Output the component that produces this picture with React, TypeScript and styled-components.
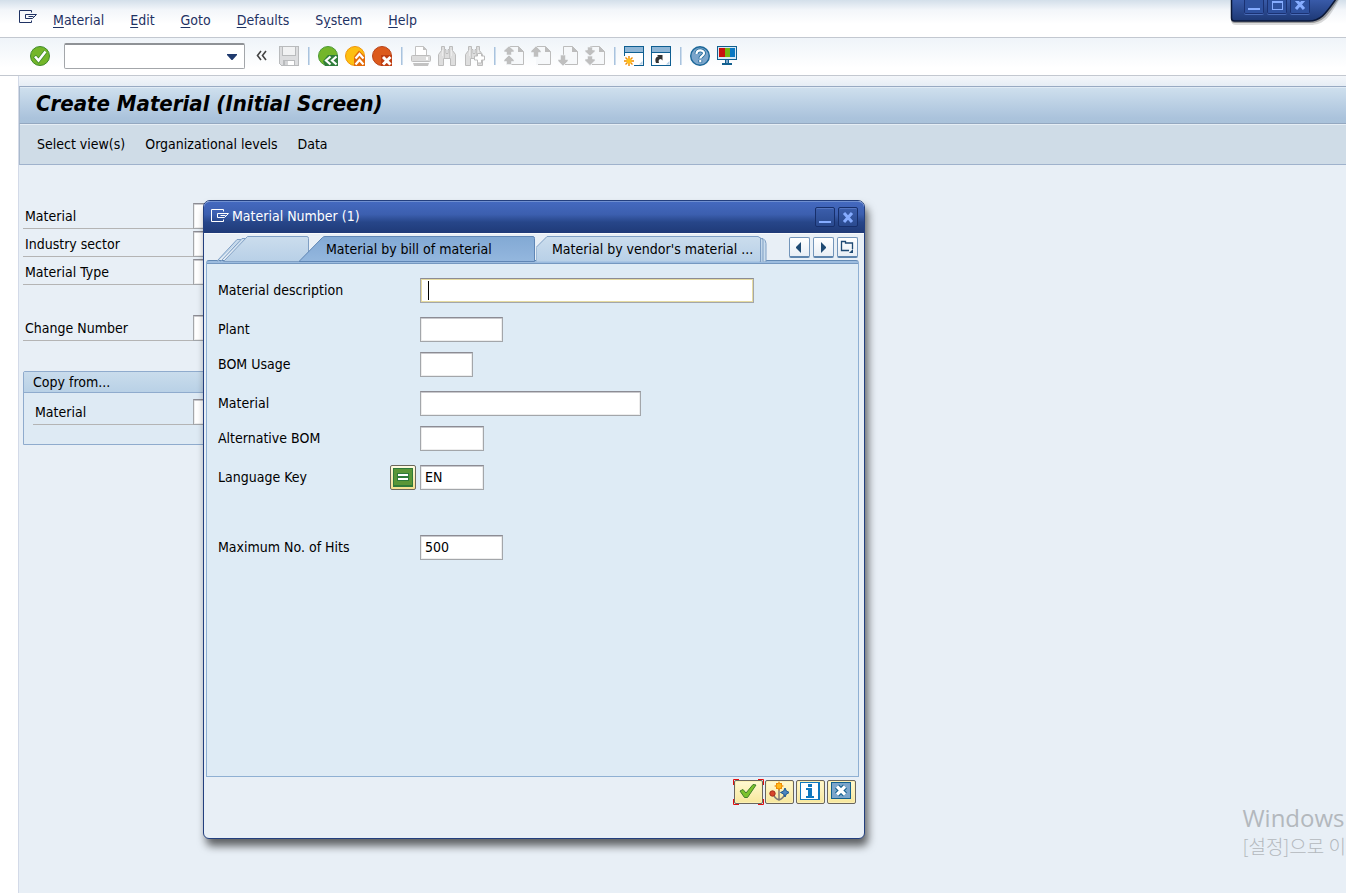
import React from "react";
import styled, { createGlobalStyle, css } from "styled-components";

const GlobalStyle = createGlobalStyle`
  *, *::before, *::after { box-sizing: border-box; }
  html, body { margin: 0; }
  body {
    background: #e8eff6;
    color: #000;
    font-family: "DejaVu Sans Condensed", Tahoma, "Noto Sans CJK KR", sans-serif;
    font-size: 14px;
    line-height: 20px;
  }
  button, input { font: inherit; color: inherit; }
  svg { display: block; flex: none; }
`;

const Screen = styled.div`
  position: relative;
  display: flex;
  flex-direction: column;
  min-height: 100vh;
  overflow: hidden;
`;

const MenuBar = styled.nav`
  display: flex;
  align-items: flex-start;
  gap: 16px;
  height: 38px;
  padding: 10px 19px 0;
  background: linear-gradient(#d3dfea, #f3f6fa 10px, #fff 24px);
  border-bottom: 1px solid #c3c8d0;
  color: #1f3263;
`;

const MenuList = styled.div`
  display: flex;
  gap: 26px;
`;

const MenuItem = styled.button`
  padding: 0;
  border: 0;
  background: none;
  u { text-underline-offset: 2px; }
`;

const ToolBar = styled.div`
  display: flex;
  align-items: center;
  gap: 7px;
  height: 38px;
  padding: 0 30px 1px;
  background: linear-gradient(#eff4f9, #fff 30px);
  border-bottom: 1px solid #c3c8d0;
`;

const ToolButton = styled.button`
  display: flex;
  padding: 0;
  border: 0;
  background: none;
`;

const Divider = styled.span`
  width: 2px;
  height: 18px;
  margin: 0 1px 0 2px;
  background: linear-gradient(90deg, #a9c3de 50%, #cddded 50%);
`;

const CommandBox = styled.div`
  display: flex;
  align-items: center;
  width: 181px;
  height: 26px;
  margin: 0 4px 0 7px;
  border: 1px solid #a3a6aa;
  border-top: 2px solid #8f9296;
  border-radius: 2px;
  background: #fff;
`;

const CommandInput = styled.input`
  flex: 1;
  min-width: 0;
  padding: 0 4px;
  border: 0;
  outline: 0;
  background: none;
`;

const CommandToggle = styled.button`
  padding: 0 7px;
  border: 0;
  background: none;
`;

const Collapse = styled.button`
  display: flex;
  margin-right: 5px;
  padding: 0;
  border: 0;
  background: none;
`;

const Body = styled.div`
  flex: 1;
  display: flex;
  padding-left: 18px;
  background: linear-gradient(90deg, #fff 18px, transparent 18px);
`;

const Page = styled.main`
  flex: 1;
  min-width: 0;
  border-left: 1px solid #d3dae8;
`;

const PageTop = styled.div`
  height: 10px;
  background: linear-gradient(#f3f6fa, #e6edf5);
`;

const TitleBar = styled.header`
  display: flex;
  align-items: center;
  height: 38px;
  padding: 0 16px 2px;
  border-top: 1px solid #98aac2;
  border-bottom: 1px solid #94a8c0;
  border-left: 1px solid #a9b9cc;
  background: linear-gradient(#cfe0ee, #abc3dc 85%, #a9c2da);
  box-shadow: inset 0 1px #e0ebf5;
`;

const Title = styled.h1`
  margin: 0;
  font-size: 22px;
  line-height: 26px;
  font-style: italic;
  font-weight: 700;
`;

const FunctionBar = styled.div`
  display: flex;
  align-items: center;
  gap: 20px;
  height: 41px;
  padding: 0 17px;
  border-bottom: 1px solid #9fb2cc;
  border-left: 1px solid #a9b9cc;
  background: #cfdce7;
  box-shadow: inset 0 1px #e6eef5;
`;

const FunctionButton = styled.button`
  padding: 0;
  border: 0;
  background: none;
`;

const BackForm = styled.form`
  display: flex;
  flex-direction: column;
  gap: 30px;
  max-width: 480px;
  padding: 38px 4px;
`;

const RowStack = styled.div`
  display: grid;
  gap: 2px;
`;

const BackRow = styled.div<{ $inset?: boolean }>`
  display: flex;
  height: 26px;
  margin-left: ${(p) => (p.$inset ? 9 : 0)}px;
`;

const BackLabel = styled.label<{ $inset?: boolean }>`
  width: ${(p) => (p.$inset ? 160 : 170)}px;
  padding: 3px 2px 0;
  border-bottom: 1px solid #b4b4b4;
`;

const fieldLook = css`
  height: 26px;
  padding: 0 4px 1px;
  border: 1px solid #a3a6aa;
  border-top-color: #8c8c94;
  border-radius: 0;
  outline: 0;
  background: #fff;
  box-shadow: inset 0 1px #c9c9cd, inset 1px 0 #ededed, inset -1px -1px #ededed;
`;

const BackField = styled.input`
  ${fieldLook}
  width: 180px;
`;

const GroupBox = styled.section`
  height: 74px;
  border: 1px solid #8fabcd;
  border-radius: 2px 2px 0 0;
  background: #deeaf4;
`;

const GroupTitle = styled.h2`
  height: 21px;
  margin: 0 0 6px;
  padding: 0 9px;
  border-bottom: 1px solid #8fabcd;
  background: linear-gradient(#c9dcec, #b9d1e6);
  font-size: 14px;
  font-weight: 400;
  line-height: 20px;
`;

const WindowControls = styled.div`
  position: absolute;
  top: 0;
  right: 0;
  width: 118px;
  height: 30px;
  display: flex;
  gap: 3px;
  padding-left: 16px;
`;

const ControlsShape = styled.svg`
  position: absolute;
  top: 0;
  left: 0;
`;

const ControlButton = styled.button`
  position: relative;
  width: 20px;
  height: 14px;
  padding: 0 0 0 3px;
  border: 1px solid #1b3273;
  border-top: 0;
  border-radius: 0 0 2px 2px;
  background: #2f52a0;
  box-shadow: 0 1px #4a6cb8;
`;

const Dialog = styled.section`
  position: absolute;
  top: 200px;
  left: 203px;
  width: 662px;
  border: 1px solid #233f7e;
  border-radius: 7px 7px 6px 6px;
  background: #e8eff6;
  box-shadow: 3px 7px 9px rgba(0, 0, 0, 0.6);
`;

const DialogTitleBar = styled.header`
  display: flex;
  align-items: center;
  gap: 3px;
  height: 32px;
  padding: 0 6px 3px 7px;
  border-top: 1px solid #6f8fd0;
  border-radius: 6px 6px 0 0;
  background: linear-gradient(#4469bf, #3c5faf 40%, #274689 65%, #1f3a78);
  color: #fff;
`;

const DialogTitle = styled.h2`
  flex: 1;
  margin: 0;
  font-size: 14px;
  font-weight: 400;
`;

const DialogControl = styled.button`
  width: 20px;
  height: 20px;
  margin-top: 2px;
  padding: 0;
  border: 1px solid #172f6b;
  border-radius: 2px;
  background: linear-gradient(#3b5eac, #2a4a8f);
  box-shadow: inset 0 1px #5475c0;
`;

const TabStrip = styled.div`
  display: flex;
  align-items: flex-start;
  height: 27px;
  padding: 2px 6px 0 13px;
  border-top: 1px solid #f8fafc;
`;

const Tab = styled.button<{ $width: number; $lead: number; $active?: boolean }>`
  position: relative;
  z-index: ${(p) => (p.$active ? 1 : 0)};
  flex: none;
  width: ${(p) => p.$width}px;
  height: 26px;
  margin-right: ${(p) => (p.$active ? 0 : -10)}px;
  padding: 0 0 0 ${(p) => p.$lead}px;
  border: 0;
  background: none;
  text-align: left;
  white-space: nowrap;
  svg { position: absolute; top: 0; left: 0; z-index: -1; }
`;

const TabTools = styled.div`
  display: flex;
  gap: 3px;
  margin: 1px 0 0 auto;
`;

const TabTool = styled.button`
  display: grid;
  place-items: center;
  width: 21px;
  height: 21px;
  padding: 0 2px 0 0;
  border: 1px solid #7395ba;
  border-bottom: 2px solid #5d84ad;
  border-radius: 2px;
  background: linear-gradient(#fff, #e8eef5);
`;

const Pane = styled.form`
  display: flex;
  flex-direction: column;
  gap: 14px;
  min-height: 517px;
  margin: 0 5px 0 2px;
  padding: 17px 11px;
  border: 1px solid #8fb0d3;
  border-top-color: #6289b4;
  border-radius: 3px 3px 0 0;
  background: linear-gradient(#9cbcdf 2px, #7598c0 2px, #7598c0 3px, #deebf5 3px);
`;

const FieldPair = styled.div`
  display: grid;
  gap: 10px;
`;

const FieldRow = styled.div<{ $apart?: boolean }>`
  display: flex;
  align-items: center;
  height: 25px;
  margin-top: ${(p) => (p.$apart ? 31 : 0)}px;
`;

const FieldLabel = styled.label`
  width: 172px;
  padding-bottom: 2px;
`;

const OptionSlot = styled.span`
  width: 30px;
`;

const Field = styled.input<{ $width: number; $current?: boolean }>`
  ${fieldLook}
  width: ${(p) => p.$width}px;
  height: 25px;
  ${(p) => p.$current && css`
    box-shadow: inset 0 0 0 1px #e6dba0;
  `}
`;

const TextCaret = styled.span`
  width: 1px;
  height: 19px;
  margin-left: -326px;
  background: #000;
`;

const OptionButton = styled.button`
  display: grid;
  place-items: center;
  width: 26px;
  height: 25px;
  padding: 0;
  border: 1px solid #6b675c;
  border-radius: 2px;
  background: linear-gradient(#fffbe0, #f4e08f);
`;

const DialogFooter = styled.footer`
  display: flex;
  justify-content: flex-end;
  gap: 2px;
  height: 61px;
  padding: 3px 8px 0;
`;

const FooterButton = styled.button<{ $focused?: boolean }>`
  position: relative;
  display: grid;
  place-items: center;
  width: 29px;
  height: 24px;
  padding: 0 2px 2px 0;
  border: 1px solid #68655e;
  border-radius: 2px;
  background: linear-gradient(#fff9d2, #f7e79c);
  box-shadow: inset 0 0 0 1px #fbf0b4;
`;

const FocusCorners = styled.svg`
  position: absolute;
  top: -2px;
  left: -2px;
`;

const Watermark = styled.div`
  position: absolute;
  right: 0;
  bottom: 34px;
  color: #b3b8bd;
  white-space: nowrap;
`;

const WatermarkTitle = styled.div`
  font: 24px/30px "Open Sans", "Noto Sans", sans-serif;
`;

const WatermarkText = styled.div`
  font: 300 19px/26px "Noto Sans CJK KR", sans-serif;
`;

const Icon = ({ children, crisp, w = 20, h = 20 }: { children: React.ReactNode; crisp?: boolean; w?: number; h?: number }) => (
  <svg width={w} height={h} viewBox={`0 0 ${w} ${h}`} fill="none" aria-hidden="true" shapeRendering={crisp ? "crispEdges" : undefined}>
    {children}
  </svg>
);

const ExitIcon = ({ color }: { color: string }) => (
  <Icon w={18} h={14}>
    <path d="M12.500 2.500V.5H.5v12h12v-2M6.500 4.500H17.500l-4 4h-7zM9.500 6.500h5" stroke={color} />
  </Icon>
);

const CheckIcon = () => (
  <Icon>
    <circle cx="10" cy="10" r="9.500" fill="#74b62a" stroke="#3f8a2a" />
    <path d="M4.500 10l4 4.500L15.500 5.500" stroke="#3f8a2a" strokeWidth="4" />
    <path d="M5 10.500l3.500 4L15.500 5.500" stroke="#fff" strokeWidth="2.600" />
  </Icon>
);

const SaveIcon = () => (
  <Icon crisp>
    <path d="M0 0h20v20H2l-2-2z" fill="#b9bbbd" />
    <path d="M1 1h18v18H2l-1-1z" fill="#dcdddf" />
    <path d="M3 0h14v10H3z" fill="#b9bbbd" />
    <path d="M4 1h12v8H4z" fill="#f1f2f3" />
    <path d="M4 14h12v6H4z" fill="#b9bbbd" />
    <path d="M6 15h9v4H6z" fill="#fff" />
    <path d="M6 15h3v4H6z" fill="#d4d5d7" />
  </Icon>
);

const BackIcon = () => (
  <Icon>
    <circle cx="10" cy="10" r="9.500" fill="#74b62a" stroke="#4b9a34" />
    <path d="M20 9v11H7l-2-5 5-6z" fill="#2f7d3a" />
    <path d="M12.500 10.500L8 14.500l4.500 4M18.500 10.500L14 14.500l4.500 4" stroke="#fff" strokeWidth="2.200" />
  </Icon>
);

const UpIcon = () => (
  <Icon>
    <circle cx="10" cy="10" r="9.500" fill="#fdbf12" stroke="#f0940a" />
    <path d="M14 4.500l6 6V20H9v-9.500z" fill="#e26b0a" />
    <path d="M10.500 12.500L14.500 8l4 4.500M10.500 18.500l4-4.500 4 4.500" stroke="#fff" strokeWidth="2.200" />
  </Icon>
);

const CancelIcon = () => (
  <Icon>
    <circle cx="10" cy="10" r="9.500" fill="#dc5a1c" stroke="#b8441a" />
    <path d="M9 9h11v11H9z" fill="#bf3e12" />
    <path d="M11 11l7.500 7.500M18.500 11L11 18.500" stroke="#fff" strokeWidth="3" />
  </Icon>
);

const PrintIcon = () => (
  <Icon>
    <path d="M4.500 9V.5h8l3 3V9" fill="#fff" stroke="#c2c2c2" />
    <path d="M12 0l4 4h-4z" fill="#c2c2c2" />
    <rect x=".5" y="9.500" width="19" height="6" rx="1" fill="#dcdcdc" stroke="#bdbdbd" />
    <path d="M15 11h2v3h-2z" fill="#fff" />
    <path d="M2 17h16l-1 3H3z" fill="#c2c2c2" />
  </Icon>
);

const Binoculars = () => (
  <>
    <path d="M3.500 .5h3v3h1.500v4h2v-4h1.500v-3h3v4l3 4v11h-5v-7h-7v7h-5v-11l3-4z" fill="#dedede" stroke="#bcbcbc" />
    <path d="M4.500 4v6M13.500 4v6" stroke="#ececec" />
    <path d="M6.500 3v9M11.500 3v9" stroke="#c6c6c6" />
  </>
);

const FindIcon = () => <Icon><Binoculars /></Icon>;

const FindNextIcon = () => (
  <Icon>
    <Binoculars />
    <path d="M12.500 7.500h4v2.500h3v4h-3v3h-4v-3h-3v-4h3z" fill="#fff" stroke="#bcbcbc" />
  </Icon>
);

const pageArrows = {
  first: "M5 0l5 4.500V6H7.500v3h-5V6H0V4.500zM5 9l5 5v1.500H7.500v3h-5v-3H0V14z",
  previous: "M5 0l5 5v1.500H7.500V11h-5V6.500H0V5z",
  next: "M5 20l5-5v-1.500H7.500V9h-5v4.500H0V15z",
  last: "M5 10l5-4.500V4H7.500V1h-5v3H0v1.500zM5 19.500l5-5V13H7.500v-3h-5v3H0v1.500z",
};

const PageIcon = ({ move }: { move: keyof typeof pageArrows }) => (
  <Icon>
    <path d="M5 1h10l4 4v14H5z" fill="#f6f8fa" />
    <path d="M5.500 9V.5h9l5 5v13H7" stroke="#bdbdbd" />
    <path d="M14 0l6 6h-6z" fill="#bdbdbd" />
    <path d={pageArrows[move]} fill="#bfbfbf" stroke="#f4f7fa" strokeWidth=".6" />
  </Icon>
);

const SessionIcon = ({ shortcut }: { shortcut?: boolean }) => (
  <Icon>
    <rect x=".5" y=".5" width="19" height="19" fill="#fff" stroke="#0f5f92" />
    <path d="M1 1h18v5H1z" fill="#8fb6d6" />
    <path d="M0 6.500h20" stroke="#0f5f92" />
    <path d="M15 18.500l3.500-3.500v3.500z" fill="#b5cfe5" />
    {shortcut ? (
      <path d="M5 17c-1.500-4 0-6.500 2.500-6.500L6 9h5.500v5.500L10 13c-2 0-3 1.500-2 4z" fill="#333" />
    ) : (
      <>
        <path d="M0 10h10v10H0z" fill="#fff" />
        <path d="M5 10v10M0 15h10M1.500 11.500l7 7M8.500 11.500l-7 7" stroke="#f08a00" strokeWidth="1.400" />
        <circle cx="5" cy="15" r="2.500" fill="#ffc21a" />
      </>
    )}
  </Icon>
);

const HelpIcon = () => (
  <Icon>
    <circle cx="10" cy="10" r="9.300" fill="#7ba5cb" stroke="#1b6798" strokeWidth="1.400" />
    <path d="M6.500 8c0-5 7.500-4.500 7.500-.7 0 2.700-3.700 2.500-3.700 5.200M10.300 14v2.500" stroke="#1b6798" strokeWidth="3.800" />
    <path d="M6.500 8c0-5 7.500-4.500 7.500-.7 0 2.700-3.700 2.500-3.700 5.200M10.300 14v2.300" stroke="#fff" strokeWidth="2.200" />
  </Icon>
);

const MonitorIcon = () => (
  <Icon crisp>
    <path d="M0 0h20v14H0zM8 14h4v3h3v2H5v-2h3z" fill="#12608f" />
    <path d="M1 1h18v12H1z" fill="#d9e9f5" />
    <path d="M2 2h6v9H2z" fill="#c8100c" />
    <path d="M8 2h5v9H8z" fill="#74b510" />
    <path d="M13 2h5v9h-5z" fill="#0a78c2" />
    <path d="M9 14h2v3H9z" fill="#7ba5cb" />
  </Icon>
);

const tools: (null | [string, React.ReactNode])[] = [
  ["Save", <SaveIcon />],
  null,
  ["Back", <BackIcon />],
  ["Exit", <UpIcon />],
  ["Cancel", <CancelIcon />],
  null,
  ["Print", <PrintIcon />],
  ["Find", <FindIcon />],
  ["Find next", <FindNextIcon />],
  null,
  ["First page", <PageIcon move="first" />],
  ["Previous page", <PageIcon move="previous" />],
  ["Next page", <PageIcon move="next" />],
  ["Last page", <PageIcon move="last" />],
  null,
  ["New session", <SessionIcon />],
  ["Create shortcut", <SessionIcon shortcut />],
  null,
  ["Help", <HelpIcon />],
  ["Customize layout", <MonitorIcon />],
];

const menus: [string, string, string][] = [
  ["", "M", "aterial"],
  ["", "E", "dit"],
  ["", "G", "oto"],
  ["", "D", "efaults"],
  ["S", "y", "stem"],
  ["", "H", "elp"],
];

const BackInputRow = ({ id, label, inset }: { id: string; label: string; inset?: boolean }) => (
  <BackRow $inset={inset}>
    <BackLabel htmlFor={id} $inset={inset}>{label}</BackLabel>
    <BackField id={id} />
  </BackRow>
);

type RowProps = { id: string; label: string; width: number; value?: string; current?: boolean; option?: boolean; apart?: boolean };

const DialogRow = ({ id, label, width, value = "", current, option, apart }: RowProps) => (
  <FieldRow $apart={apart}>
    <FieldLabel htmlFor={id}>{label}</FieldLabel>
    <OptionSlot>
      {option && (
        <OptionButton type="button" aria-label="Equal to">
          <Icon crisp>
            <path d="M0 0h20v19H0z" fill="#2f7a3a" />
            <path d="M1 1h18v16H1z" fill="#5a9637" />
            <path d="M4 5h12v8H4z" fill="#2f7a3a" />
            <path d="M5 6h10v2H5zM5 10h10v2H5z" fill="#fff" />
          </Icon>
        </OptionButton>
      )}
    </OptionSlot>
    <Field id={id} $width={width} $current={current} defaultValue={value} />
    {current && <TextCaret />}
  </FieldRow>
);

export default function App() {
  return (
    <Screen>
      <GlobalStyle />
      <MenuBar aria-label="Main menu">
        <ExitIcon color="#1f3263" />
        <MenuList>
          {menus.map(([before, key, after]) => (
            <MenuItem key={key}>{before}<u>{key}</u>{after}</MenuItem>
          ))}
        </MenuList>
      </MenuBar>
      <ToolBar>
        <ToolButton aria-label="Enter"><CheckIcon /></ToolButton>
        <CommandBox>
          <CommandInput aria-label="Command" />
          <CommandToggle aria-label="Command history">
            <Icon w={10} h={6}><path d="M0 0h10v1L5.500 6h-1L0 1z" fill="#1f3a6e" /></Icon>
          </CommandToggle>
        </CommandBox>
        <Collapse aria-label="Hide command field">
          <Icon w={11} h={12}><path d="M5 1L1.500 5.500 5 10M10 1L6.500 5.500 10 10" stroke="#444" strokeWidth="1.600" /></Icon>
        </Collapse>
        {tools.map((tool, i) =>
          tool ? <ToolButton key={i} aria-label={tool[0]}>{tool[1]}</ToolButton> : <Divider key={i} />
        )}
      </ToolBar>

      <Body>
        <Page>
          <PageTop />
          <TitleBar><Title>Create Material (Initial Screen)</Title></TitleBar>
          <FunctionBar>
            <FunctionButton>Select view(s)</FunctionButton>
            <FunctionButton>Organizational levels</FunctionButton>
            <FunctionButton>Data</FunctionButton>
          </FunctionBar>
          <BackForm>
            <RowStack>
              <BackInputRow id="material" label="Material" />
              <BackInputRow id="sector" label="Industry sector" />
              <BackInputRow id="type" label="Material Type" />
            </RowStack>
            <BackInputRow id="change" label="Change Number" />
            <GroupBox>
              <GroupTitle>Copy from...</GroupTitle>
              <BackInputRow id="copy" label="Material" inset />
            </GroupBox>
          </BackForm>
        </Page>
      </Body>

      <WindowControls>
        <ControlsShape width="118" height="30" viewBox="0 0 118 30" fill="none" aria-hidden="true">
          <defs>
            <linearGradient id="capsule" x1="0" y1="0" x2="0" y2="1">
              <stop offset="0" stopColor="#3a5cab" />
              <stop offset="1" stopColor="#1d3874" />
            </linearGradient>
          </defs>
          <path d="M3 0v20q0 5 5 5h74c14 0 20-8 29-25z" fill="#000" opacity=".14" />
          <path d="M3 0v19q0 4 4 4h75c13 0 18-8 28-23z" fill="#000" opacity=".3" />
          <path d="M3.500-1v19q0 3 3 3H81c12 0 17-8 27-22z" fill="url(#capsule)" stroke="#0b1838" strokeWidth="1.500" />
        </ControlsShape>
        <ControlButton aria-label="Minimize">
          <Icon w={12} h={12} crisp><path d="M0 7h12v2H0z" fill="#86acff" /></Icon>
        </ControlButton>
        <ControlButton aria-label="Maximize">
          <Icon w={12} h={12} crisp><path d="M1 0h11v2H1zM1 2h1v7H1zM11 2h1v7h-1zM1 8h11v1H1z" fill="#86acff" /></Icon>
        </ControlButton>
        <ControlButton aria-label="Close">
          <Icon w={12} h={12}><path d="M2 -1l8 9M10 -1L2 8" stroke="#86acff" strokeWidth="3" /></Icon>
        </ControlButton>
      </WindowControls>

      <Watermark>
        <WatermarkTitle>Windows</WatermarkTitle>
        <WatermarkText>[설정]으로 이</WatermarkText>
      </Watermark>

      <Dialog role="dialog" aria-label="Material Number (1)">
        <DialogTitleBar>
          <ExitIcon color="#fff" />
          <DialogTitle>Material Number (1)</DialogTitle>
          <DialogControl aria-label="Minimize">
            <Icon w={18} h={18} crisp><path d="M3 13h12v2H3z" fill="#86acff" /></Icon>
          </DialogControl>
          <DialogControl aria-label="Close">
            <Icon w={18} h={18}><path d="M5 5l8 9M13 5l-8 9" stroke="#86acff" strokeWidth="3" /></Icon>
          </DialogControl>
        </DialogTitleBar>
        <TabStrip>
          <Tab $width={92} $lead={30} aria-label="Previous tabs">
            <Icon w={92} h={26}>
              <path d="M.5 25.500v-1L20 3.500h4M3.500 25.500L25 2.500h3M6.500 25.500L30.500 .5H90q1.500 0 1.500 2v23z" fill="url(#tab-idle)" stroke="#7f9fc4" />
            </Icon>
          </Tab>
          <Tab $active $width={237} $lead={27}>
            <Icon w={237} h={27}>
              <defs>
                <linearGradient id="tab-active" x1="0" y1="0" x2="0" y2="1">
                  <stop offset="0" stopColor="#82a9d4" />
                  <stop offset="1" stopColor="#94b7de" />
                </linearGradient>
                <linearGradient id="tab-idle" x1="0" y1="0" x2="0" y2="1">
                  <stop offset="0" stopColor="#cbdded" />
                  <stop offset="1" stopColor="#b8d0e7" />
                </linearGradient>
              </defs>
              <path d="M0 25.500L23.500 1.500Q24.500 .5 26 .5H234q1.500 0 1.500 2v23z" fill="url(#tab-active)" stroke="#5f86b5" />
            </Icon>
            Material by bill of material
          </Tab>
          <Tab $width={231} $lead={16}>
            <Icon w={231} h={26}>
              <path d="M225 2.500h2q3 2 3 5V26h-6z" fill="#cbdded" stroke="#7f9fc4" />
              <path d="M0 25.500V11.500L11 .5H222l5 3v22" fill="url(#tab-idle)" stroke="#7f9fc4" />
              <path d="M224.500 2v24" stroke="#7f9fc4" />
            </Icon>
            Material by vendor's material ...
          </Tab>
          <TabTools>
            <TabTool aria-label="Scroll left"><Icon w={11} h={11}><path d="M8 0v11L3 6V5z" fill="#1f4a73" /></Icon></TabTool>
            <TabTool aria-label="Scroll right"><Icon w={11} h={11}><path d="M4 0v11l5-5V5z" fill="#1f4a73" /></Icon></TabTool>
            <TabTool aria-label="Tab list">
              <Icon w={14} h={14}>
                <path d="M9 10.500H1.500v-9h4v1.500h7v6" stroke="#1f4a73" strokeWidth="1.300" />
                <path d="M9 13h4V9z" fill="#1f4a73" />
              </Icon>
            </TabTool>
          </TabTools>
        </TabStrip>
        <Pane>
          <DialogRow id="description" label="Material description" width={334} current />
          <FieldPair>
            <DialogRow id="plant" label="Plant" width={83} />
            <DialogRow id="usage" label="BOM Usage" width={53} />
          </FieldPair>
          <FieldPair>
            <DialogRow id="bom-material" label="Material" width={221} />
            <DialogRow id="alternative" label="Alternative BOM" width={64} />
          </FieldPair>
          <DialogRow id="language" label="Language Key" width={64} value="EN" option />
          <DialogRow id="hits" label="Maximum No. of Hits" width={83} value="500" apart />
        </Pane>
        <DialogFooter>
          <FooterButton $focused aria-label="Continue">
            <FocusCorners width="31" height="26" fill="none" aria-hidden="true">
              <path d="M.5 6V.5H6M25 .5h5.500V6M.5 20v5.500H6M25 25.500h5.500V20" stroke="#e01010" />
            </FocusCorners>
            <Icon w={18} h={16}>
              <path d="M1 8l3-1.500 3 3.500L14 1.500l3 .5L8.500 14.500h-3z" fill="#7cc22c" stroke="#3f7f2a" />
            </Icon>
          </FooterButton>
          <FooterButton aria-label="Multiple selection">
            <Icon>
              <path d="M10 6v13M4 12q1 5 6 7 5-2 6-7" stroke="#777" strokeWidth="1.400" />
              <path d="M10 .5v9M5.500 5h9M7 2l6 6M13 2L7 8" stroke="#f08a00" />
              <circle cx="10" cy="5" r="3" fill="#ffb81a" stroke="#f08a00" />
              <circle cx="3.500" cy="12.500" r="2.700" fill="#d8452b" stroke="#a3301c" />
              <path d="M16 7l1.400 3.100L20.500 11.500l-3.100 1.400L16 16l-1.400-3.100-3.100-1.400 3.100-1.400z" fill="#4d86c0" stroke="#1b568f" />
            </Icon>
          </FooterButton>
          <FooterButton aria-label="Information">
            <Icon w={20} h={18} crisp>
              <path d="M0 0h20v18H0z" fill="#0f78be" />
              <path d="M1 1h17v16H1z" fill="#fff" />
              <path d="M8 2h4v3H8zM6 6h6v8h2v2H6v-2h2V8H6z" fill="#0f78be" />
            </Icon>
          </FooterButton>
          <FooterButton aria-label="Cancel">
            <Icon w={20} h={18}>
              <rect x=".5" y=".5" width="19" height="16" fill="#7ba5cb" stroke="#12608f" />
              <path d="M6 4.500l8 8M14 4.500l-8 8" stroke="#12608f" strokeWidth="5.500" />
              <path d="M6 4.500l8 8M14 4.500l-8 8" stroke="#fff" strokeWidth="3.200" />
            </Icon>
          </FooterButton>
        </DialogFooter>
      </Dialog>
    </Screen>
  );
}
